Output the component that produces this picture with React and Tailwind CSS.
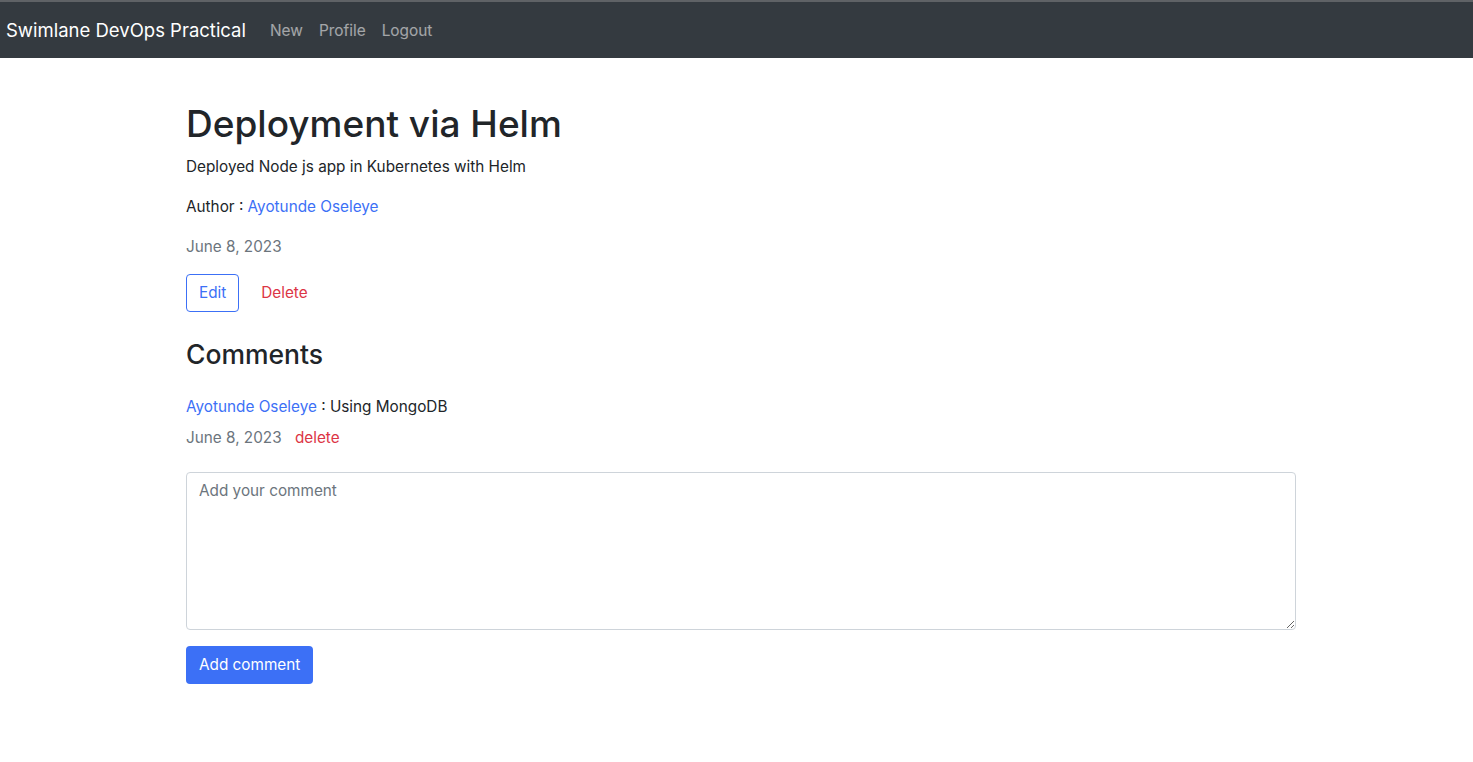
export default function App() {
  const font = { fontFamily: 'Inter, "Liberation Sans", sans-serif' };
  return (
    <div className="min-h-[762px] bg-white text-[#212529]" style={font}>
      <nav className="h-[58px] bg-[#343a40] border-t-2 border-[#5f6266] flex items-center pl-[6px]">
        <span className="text-[18.5px] text-white leading-[30px] mr-[16px]">Swimlane DevOps Practical</span>
        <a className="text-[15.4px] text-white/55 px-[8px] pt-[2px]">New</a>
        <a className="text-[15.4px] text-white/55 px-[8px] pt-[2px]">Profile</a>
        <a className="text-[15.4px] text-white/55 px-[8px] pt-[2px]">Logout</a>
      </nav>
      <main className="pl-[186px] pt-[40px]">
        <div className="w-[1110px] text-[15.3px]">
          <h1 className="text-[37px] font-medium leading-[48px] pt-[2px] mb-[6px] text-[#212529]">Deployment via Helm</h1>
          <p className="leading-[24px] mb-[16px] pt-[1px]">Deployed Node js app in Kubernetes with Helm</p>
          <p className="leading-[24px] mb-[16px]">
            Author : <a className="text-[#3c70f6]">Ayotunde Oseleye</a>
          </p>
          <p className="leading-[24px] mb-[15px] text-[#6c757d]">June 8, 2023</p>
          <div className="flex items-center gap-[10px]">
            <button className="h-[38px] px-[12px] border border-[#3c70f6] text-[#3c70f6] rounded-[4px]">Edit</button>
            <button className="h-[38px] px-[12px] text-[#dc3545]">Delete</button>
          </div>
          <h2 className="text-[26.5px] font-medium leading-[38px] mt-[23px] mb-[21px]">Comments</h2>
          <p className="leading-[24px] mb-[7px] pt-[1px]">
            <a className="text-[#3c70f6]">Ayotunde Oseleye</a> : Using MongoDB
          </p>
          <p className="leading-[24px] text-[#6c757d] mb-[22px]">
            June 8, 2023 <span className="text-[#dc3545] ml-[9px]">delete</span>
          </p>
          <textarea
            placeholder="Add your comment"
            className="block w-[1110px] h-[158px] border border-[#ced4da] rounded-[4px] px-[12px] py-[6px] text-[15.3px] leading-[24px] placeholder:text-[#6c757d] outline-none"
            style={font}
          />
          <button className="mt-[16px] h-[38px] px-[13px] bg-[#3c70f6] text-white rounded-[4px]">Add comment</button>
        </div>
      </main>
    </div>
  );
}
